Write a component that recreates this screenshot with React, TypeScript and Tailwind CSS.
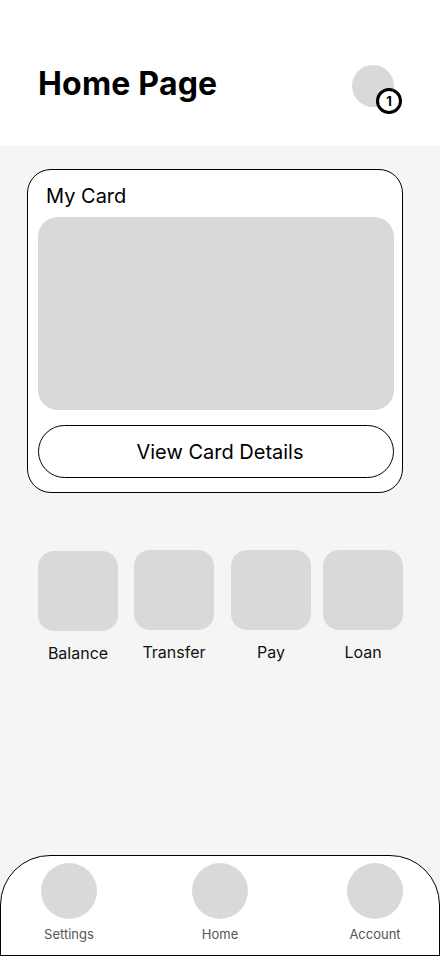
import React from 'react'

const actions = [
  { label: 'Balance', cls: 'ml-[38px] mt-px' },
  { label: 'Transfer', cls: 'ml-[16px]' },
  { label: 'Pay', cls: 'ml-[17px]' },
  { label: 'Loan', cls: 'ml-[12px]' },
]

const tabs = [
  { label: 'Settings', cls: 'ml-[28px]' },
  { label: 'Home', cls: 'ml-[71px]' },
  { label: 'Account', cls: 'ml-[75px]' },
]

export default function App() {
  return (
    <div className="min-h-[956px] flex flex-col bg-[#f5f5f5] text-black" style={{ fontFamily: 'Inter, "Noto Sans", sans-serif' }}>
      <header className="h-[146px] bg-white flex items-start pt-[65px] pl-[38px] pr-[46px]">
        <h1 className="text-[32px] leading-[40px] font-bold tracking-[0.2px] mt-[-1px]">Home Page</h1>
        <div className="ml-auto relative w-[42px] h-[42px] rounded-full bg-[#d9d9d9]">
          <span className="absolute left-[24px] top-[23px] w-[26px] h-[26px] rounded-full border-[3px] border-black bg-white flex items-center justify-center text-[13px] font-bold leading-none">1</span>
        </div>
      </header>

      <main className="flex-1 flex flex-col pt-[23px]">
        <section className="mx-[27px] w-[376px] bg-white border border-black rounded-[24px] pl-[10px] pr-[8px] pt-[14px] pb-[14px]">
          <h2 className="text-[20px] leading-[24px] pl-[8px]">My Card</h2>
          <div className="mt-[9px] h-[193px] rounded-[20px] bg-[#d9d9d9]" />
          <button className="mt-[15px] w-full h-[53px] rounded-full border border-black pl-[8px] text-[20px] leading-[24px]">View Card Details</button>
        </section>

        <div className="flex mt-[57px]">
          {actions.map(a => (
            <div key={a.label} className={`flex flex-col items-center ${a.cls}`}>
              <div className="w-[80px] h-[80px] rounded-[16px] bg-[#d9d9d9]" />
              <span className="mt-[10px] text-[16px] leading-[24px] text-[#111]">{a.label}</span>
            </div>
          ))}
        </div>

        <nav className="mt-auto h-[101px] bg-white border border-black rounded-t-[50px] flex pt-[7px]">
          {tabs.map(t => (
            <div key={t.label} className={`w-[80px] flex flex-col items-center ${t.cls}`}>
              <div className="w-[56px] h-[56px] rounded-full bg-[#d9d9d9]" />
              <span className="mt-[7px] text-[13px] leading-[16px] text-[#555]">{t.label}</span>
            </div>
          ))}
        </nav>
      </main>
    </div>
  )
}
